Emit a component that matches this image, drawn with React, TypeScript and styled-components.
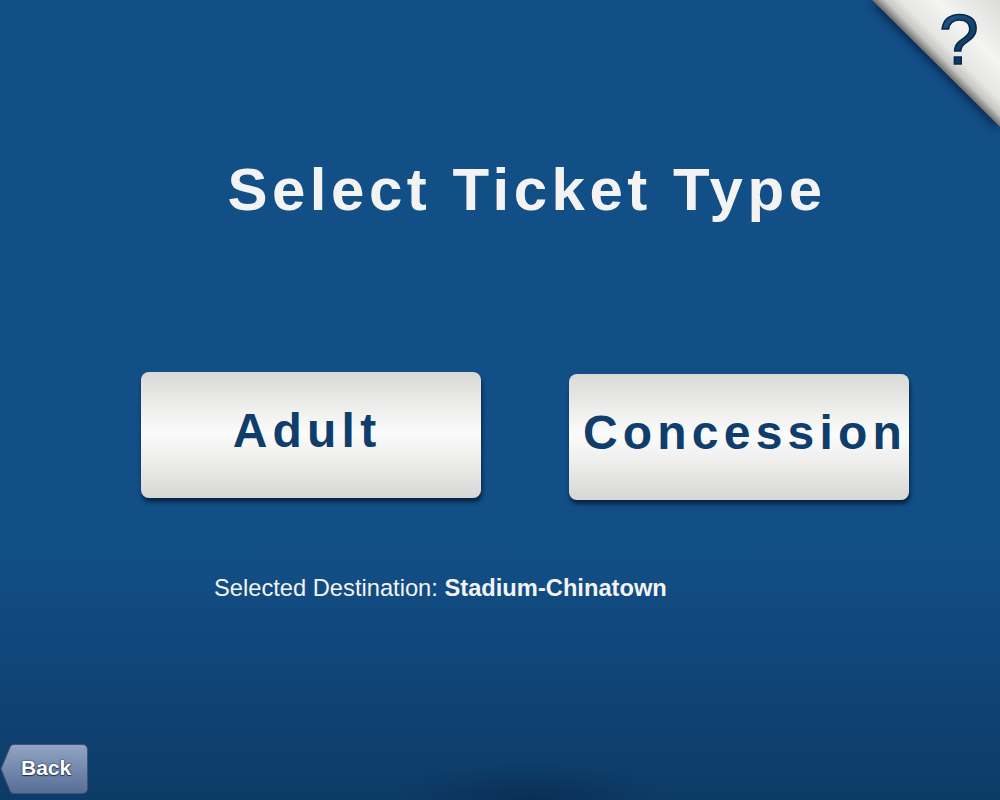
import React from "react";
import styled, { createGlobalStyle } from "styled-components";

const Global = createGlobalStyle`
  html, body { margin: 0; padding: 0; }
  body { font-family: "Liberation Sans", Arial, sans-serif; }
`;

const Screen = styled.div`
  position: relative;
  width: 1000px;
  height: 800px;
  overflow: hidden;
  display: flex;
  flex-direction: column;
  background:
    radial-gradient(ellipse 140px 40px at 530px 802px, rgba(6, 28, 56, 0.4), rgba(6, 28, 56, 0) 100%),
    linear-gradient(to bottom, #124f87 0%, #124f87 68%, #0d3b67 100%);
`;

const Title = styled.h1`
  margin: 160px 0 0 0;
  padding-left: 54px;
  font-size: 60px;
  line-height: 60px;
  font-weight: 700;
  letter-spacing: 4.5px;
  color: #f3f3f3;
  text-align: center;
`;

const ButtonRow = styled.div`
  display: flex;
  gap: 88px;
  align-items: flex-start;
  margin-top: 152px;
  padding-left: 141px;
`;

const TicketButton = styled.button<{ $drop?: number; $left?: number; $right?: number }>`
  width: 340px;
  height: 126px;
  margin-top: ${(p) => p.$drop ?? 0}px;
  border: none;
  border-radius: 8px;
  background: linear-gradient(to bottom, #d9d9d7 0%, #efefee 30%, #fbfbfb 48%, #eeeeed 70%, #d6d6d4 100%);
  box-shadow: 1px 4px 4px rgba(2, 20, 40, 0.75);
  display: flex;
  justify-content: center;
  align-items: flex-start;
  padding: 35px ${(p) => p.$right ?? 0}px 0 ${(p) => p.$left ?? 0}px;
  font-family: "Liberation Sans", Arial, sans-serif;
  font-size: 48px;
  line-height: 48px;
  font-weight: 700;
  letter-spacing: 5.2px;
  color: #0f3e6d;
  white-space: nowrap;
  cursor: pointer;
`;

const Destination = styled.p`
  margin: 77px 0 0 0;
  padding-left: 214px;
  font-size: 23.7px;
  line-height: 23.7px;
  color: #f3f3f3;
`;

const Strong = styled.span`
  font-weight: 700;
`;

const Footer = styled.div`
  margin-top: auto;
  padding-bottom: 6px;
  display: flex;
`;

const BackButton = styled.button`
  position: relative;
  width: 88px;
  height: 50px;
  padding: 0;
  border: none;
  background: none;
  cursor: pointer;
`;

const BackShape = styled.svg`
  display: block;
`;

const BackLabel = styled.span`
  position: absolute;
  left: 21px;
  top: 13px;
  font-family: "Liberation Sans", Arial, sans-serif;
  font-size: 21px;
  line-height: 21px;
  font-weight: 700;
  color: #ffffff;
  text-shadow: 0 0 1px #1c3050, 0 1px 1px #1c3050, 0 0 2px rgba(20, 40, 70, 0.8);
`;

const HelpCorner = styled.svg`
  position: absolute;
  top: 0;
  right: 0;
  filter: drop-shadow(-2px 3px 4px rgba(0, 10, 30, 0.55));
`;

export default function App() {
  return (
    <Screen>
      <Global />
      <Title>Select Ticket Type</Title>
      <ButtonRow>
        <TicketButton $right={8}>Adult</TicketButton>
        <TicketButton $drop={2} $left={12}>Concession</TicketButton>
      </ButtonRow>
      <Destination>
        Selected Destination: <Strong>Stadium-Chinatown</Strong>
      </Destination>
      <Footer>
        <BackButton>
          <BackShape width="88" height="50" viewBox="0 0 88 50">
            <defs>
              <linearGradient id="backFill" x1="0" y1="0" x2="0" y2="1">
                <stop offset="0" stopColor="#93a5c2" />
                <stop offset="0.5" stopColor="#7489ad" />
                <stop offset="1" stopColor="#586d94" />
              </linearGradient>
            </defs>
            <path
              d="M14 0.5 H82 Q87.5 0.5 87.5 6 V44 Q87.5 49.5 82 49.5 H14 Q12 49.5 10.5 48 L1 25 L10.5 2 Q12 0.5 14 0.5 Z"
              fill="url(#backFill)"
              stroke="#3f5479"
              strokeWidth="1"
            />
          </BackShape>
          <BackLabel>Back</BackLabel>
        </BackButton>
      </Footer>
      <HelpCorner width="128" height="128" viewBox="0 0 128 128">
        <defs>
          <linearGradient id="cornerFill" gradientUnits="userSpaceOnUse" x1="63.5" y1="63.5" x2="127" y2="0">
            <stop offset="0" stopColor="#6a6a6a" />
            <stop offset="0.1" stopColor="#c6c6c4" />
            <stop offset="0.22" stopColor="#e6e6e4" />
            <stop offset="0.5" stopColor="#f4f4f2" />
            <stop offset="1" stopColor="#dcdcda" />
          </linearGradient>
          <linearGradient id="qFill" x1="0" y1="0" x2="0.4" y2="1">
            <stop offset="0" stopColor="#2f68a0" />
            <stop offset="0.45" stopColor="#174878" />
            <stop offset="1" stopColor="#0b3158" />
          </linearGradient>
        </defs>
        <polygon points="0,0 128,0 128,127" fill="url(#cornerFill)" />
        <text
          x="87"
          y="64"
          textAnchor="middle"
          fontFamily="'Liberation Sans', Arial, sans-serif"
          fontSize="71"
          fill="url(#qFill)"
          stroke="#0a2747"
          strokeWidth="1.6"
        >
          ?
        </text>
      </HelpCorner>
    </Screen>
  );
}
